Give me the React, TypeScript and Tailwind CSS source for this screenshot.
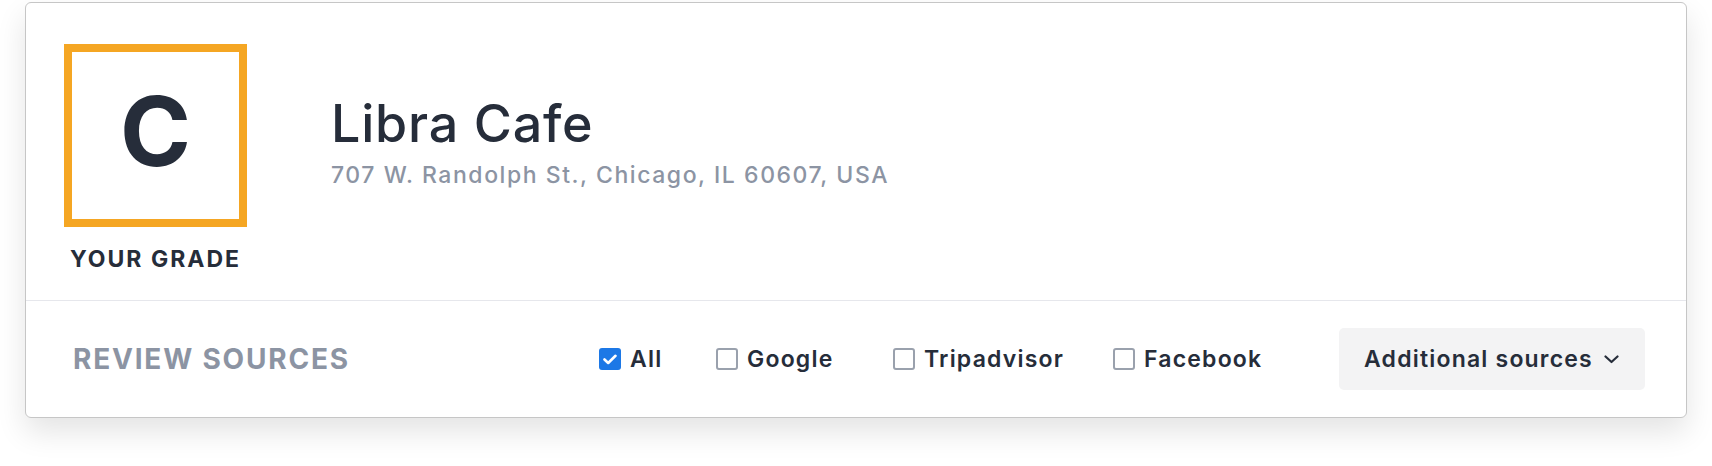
import React from "react";

function Checkbox({ checked, label, w }: { checked?: boolean; label: string; w: string }) {
  return (
    <label className={`flex items-center gap-[9px] cursor-pointer ${w}`}>
      {checked ? (
        <span className="flex h-[22px] w-[22px] shrink-0 items-center justify-center rounded-[3px] bg-[#1c78e6]">
          <svg width="14" height="11" viewBox="0 0 14 11" fill="none">
            <path d="M1.5 5.5 L5.2 9 L12.5 1.8" stroke="#ffffff" strokeWidth="2.6" strokeLinecap="round" strokeLinejoin="round" />
          </svg>
        </span>
      ) : (
        <span className="h-[22px] w-[22px] shrink-0 rounded-[3px] border-2 border-[#9aa1ad] bg-white" />
      )}
      <span className="text-[23px] font-semibold leading-none tracking-[1.2px] text-[#262d3a]">{label}</span>
    </label>
  );
}

export default function App() {
  return (
    <div className="min-h-[466px] w-full bg-white pt-[2px] font-['Inter',sans-serif]">
      <div className="mx-[25px] rounded-[6px] border border-[#c6c6c6] bg-white shadow-[0_14px_30px_rgba(0,0,0,0.11)]">
        <div className="flex h-[297px] pl-[38px] pt-[41px]">
          <div className="flex w-[183px] flex-col items-center">
            <div className="flex h-[183px] w-[183px] items-center justify-center border-[8px] border-[#f5a623]">
              <span className="mb-[10px] text-[96px] font-bold leading-none text-[#262d3a]">C</span>
            </div>
            <div className="mt-[21px] whitespace-nowrap text-[23px] font-bold leading-none tracking-[2px] text-[#262d3a]">
              YOUR GRADE
            </div>
          </div>
          <div className="ml-[84px] flex flex-col pt-[54px]">
            <h1 className="text-[52px] font-medium leading-none tracking-[0.8px] text-[#262d3a]">Libra Cafe</h1>
            <p className="mt-[14px] text-[23px] font-medium leading-none tracking-[1.55px] text-[#8c94a3]">
              707 W. Randolph St., Chicago, IL 60607, USA
            </p>
          </div>
        </div>
        <div className="h-px bg-[#e6e7ec]" />
        <div className="flex h-[116px] items-center pl-[47px] pr-[41px]">
          <div className="whitespace-nowrap text-[28px] font-bold leading-none tracking-[1.8px] text-[#8c94a3]">REVIEW SOURCES</div>
          <div className="ml-auto flex items-center">
            <Checkbox checked label="All" w="w-[117px]" />
            <Checkbox label="Google" w="w-[177px]" />
            <Checkbox label="Tripadvisor" w="w-[220px]" />
            <Checkbox label="Facebook" w="w-[226px]" />
          </div>
          <button className="flex h-[62px] w-[306px] items-center justify-between rounded-[5px] bg-[#f3f3f4] pl-[25px] pr-[26px]">
            <span className="whitespace-nowrap text-[23px] font-semibold leading-none tracking-[1.2px] text-[#262d3a]">Additional sources</span>
            <svg width="15" height="9" viewBox="0 0 15 9" fill="none">
              <path d="M1.5 1.5 L7.5 7 L13.5 1.5" stroke="#262d3a" strokeWidth="2.2" strokeLinecap="round" strokeLinejoin="round" />
            </svg>
          </button>
        </div>
      </div>
    </div>
  );
}
